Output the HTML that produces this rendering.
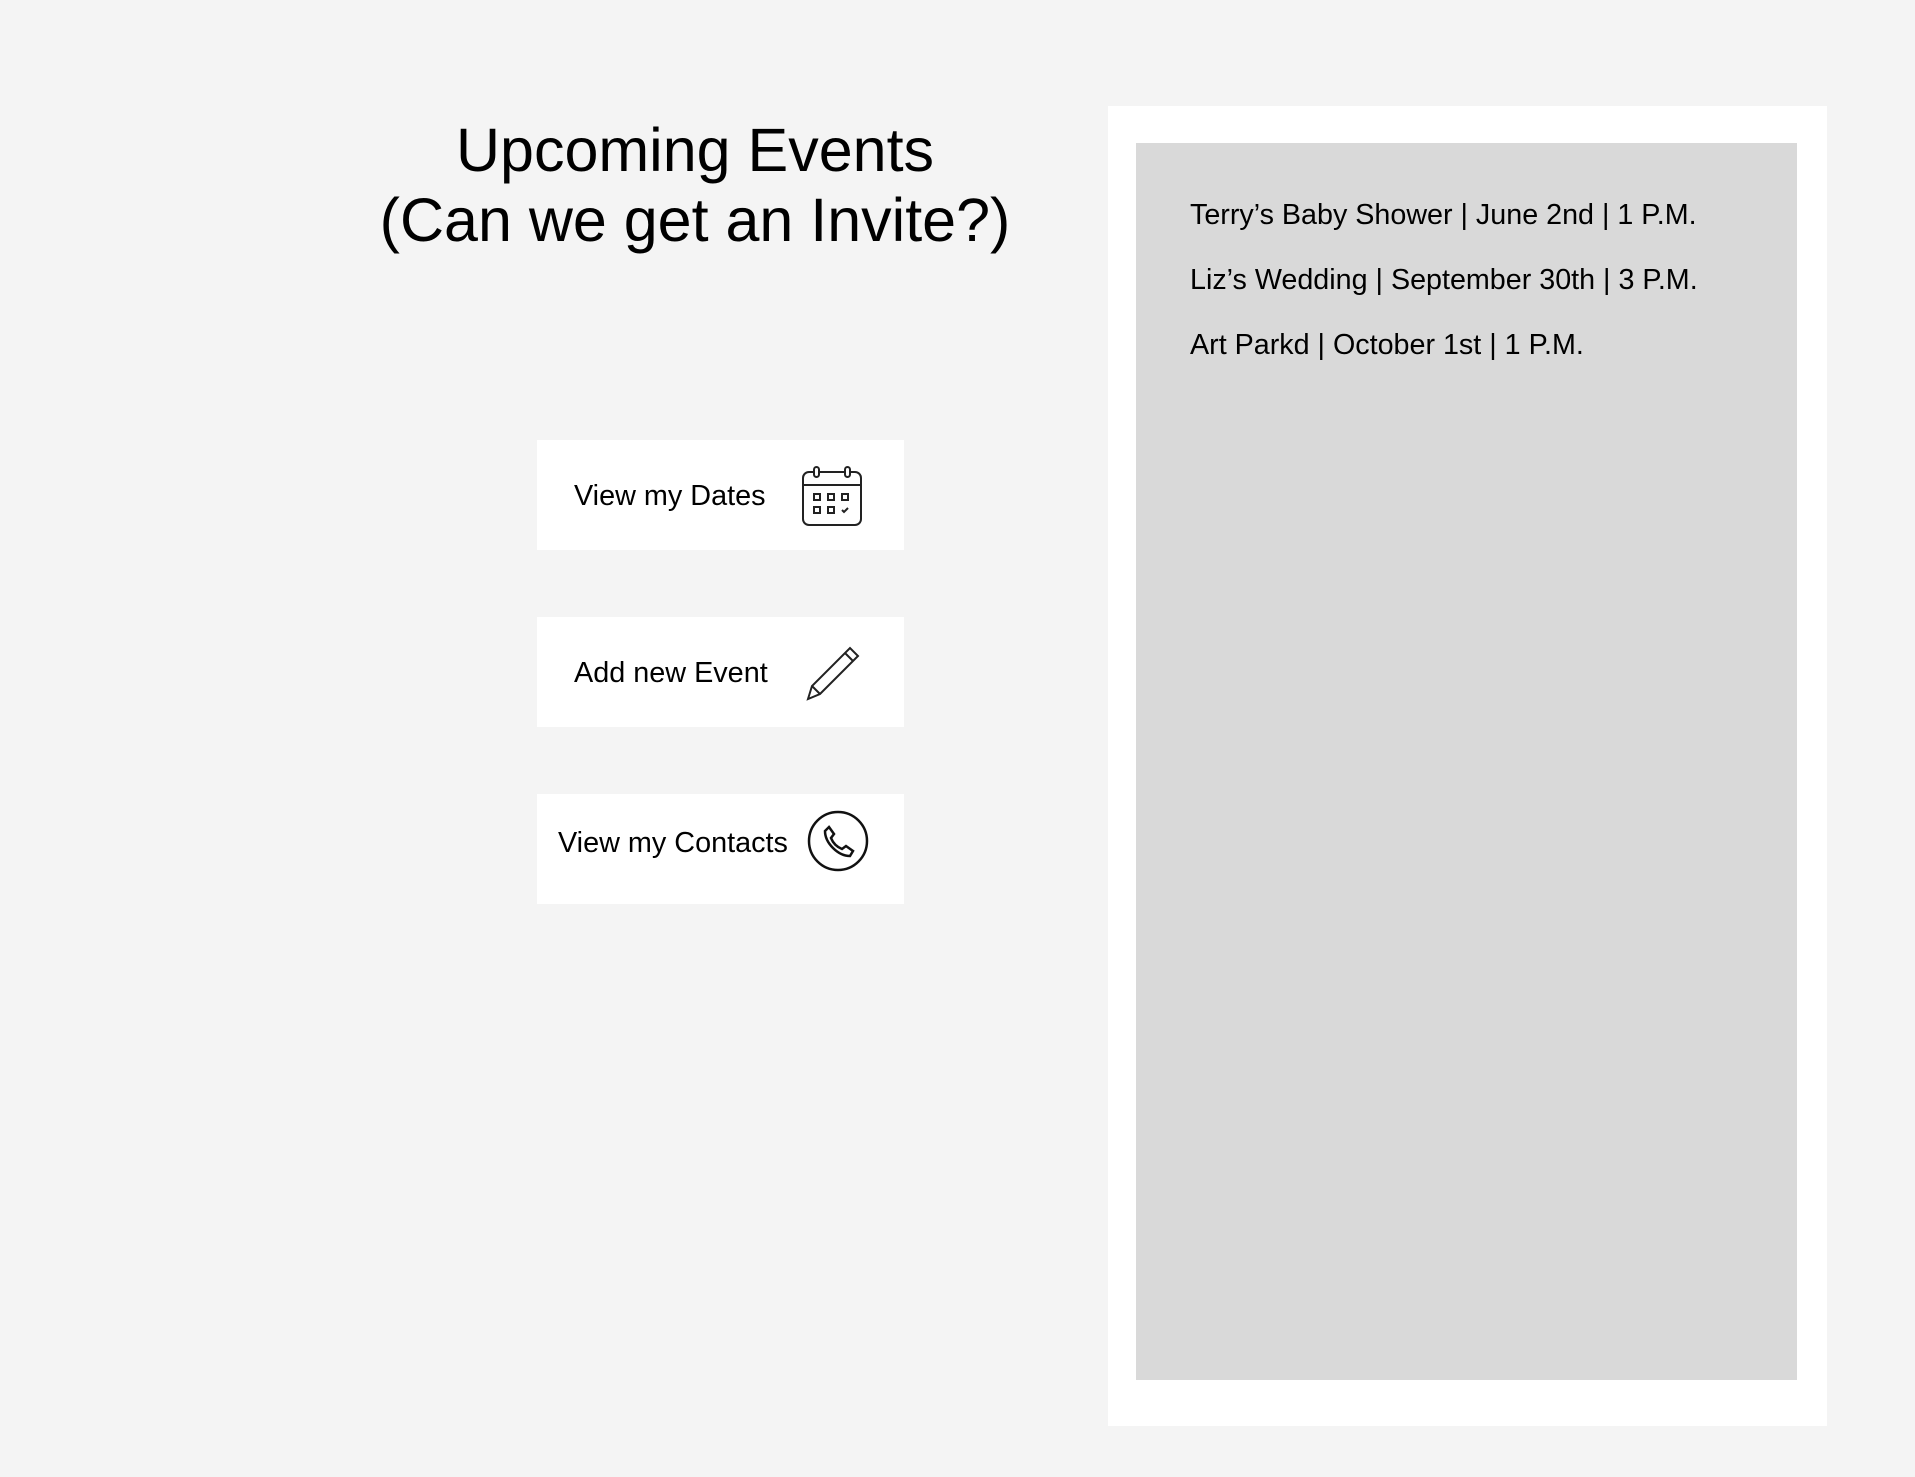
<!DOCTYPE html>
<html><head><style>
body{margin:0;width:1915px;height:1477px;background:#f4f4f4;font-family:"Liberation Sans",sans-serif;position:relative;overflow:hidden;color:#000}
.t{position:absolute;left:300px;width:790px;text-align:center;font-size:61px;line-height:70px;top:115px}
.b{position:absolute;left:537px;width:367px;height:110px;background:#fff}
.b span{position:absolute;font-size:28.8px;top:40px}
.b svg{position:absolute}
.p{position:absolute;left:1108px;top:106px;width:719px;height:1320px;background:#fff}
.g{position:absolute;left:1136px;top:143px;width:661px;height:1237px;background:#d9d9d9}
.e{position:absolute;left:1190px;font-size:28.7px}
</style></head><body>
<div class="t">Upcoming Events<br>(Can we get an Invite?)</div>
<div class="b" style="top:440px"><span style="left:37px">View my Dates</span>
<svg style="left:265px;top:26px" width="60" height="60" viewBox="0 0 60 60" fill="none" stroke="#222" stroke-width="2"><rect x="1" y="6" width="58" height="53" rx="6"/><line x1="1" y1="19" x2="59" y2="19"/><rect x="12" y="1" width="5" height="10" rx="2.5" fill="#fff"/><rect x="43" y="1" width="5" height="10" rx="2.5" fill="#fff"/><rect x="12" y="28" width="6" height="6"/><rect x="26" y="28" width="6" height="6"/><rect x="40" y="28" width="6" height="6"/><rect x="12" y="41" width="6" height="6"/><rect x="26" y="41" width="6" height="6"/><path d="M40 44l2 2 4-4"/></svg></div>
<div class="b" style="top:617px"><span style="left:37px">Add new Event</span>
<svg style="left:269px;top:28px" width="56" height="56" viewBox="0 0 56 56" fill="none" stroke="#222" stroke-width="2"><path d="M2 54l4-13L44 3l8 8L14 49z M6 41l8 8 M39 8l8 8"/></svg></div>
<div class="b" style="top:794px"><span style="left:21px;top:33px">View my Contacts</span>
<svg style="left:270px;top:16px" width="62" height="62" viewBox="0 0 62 62" fill="none" stroke="#111" stroke-width="2.5"><circle cx="31" cy="31" r="29"/><path d="M22 17l5 7-3 4c2 5 6 9 11 11l4-3 7 5-3 5c-12 0-25-13-25-25z"/></svg></div>
<div class="p"></div><div class="g"></div>
<div class="e" style="top:199px">Terry’s Baby Shower | June 2nd | 1 P.M.</div>
<div class="e" style="top:264px">Liz’s Wedding | September 30th | 3 P.M.</div>
<div class="e" style="top:329px">Art Parkd | October 1st | 1 P.M.</div>
</body></html>
